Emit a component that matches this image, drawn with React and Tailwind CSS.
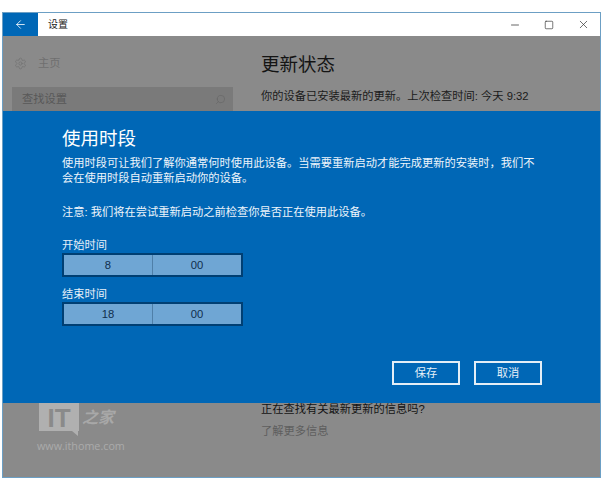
import React from 'react';
import { ArrowLeft, Minus, Square, X, Settings, Search } from 'lucide-react';

const font = "font-['Liberation_Sans','Noto_Sans_CJK_SC',sans-serif]";

function TimeField({ label, hour, minute }) {
  return (
    <div className="flex flex-col">
      <div className="h-[16px] text-[11.25px] leading-[16px] text-[#e6f0f8]">{label}</div>
      <div className="flex h-[24px] w-[181px] border-2 border-[#003f73] bg-[#6fa6d4] text-[11.25px] leading-[20px] text-[#0f2f4d]">
        <div className="flex-1 border-r border-[#4f7fa8] text-center">{hour}</div>
        <div className="flex-1 text-center">{minute}</div>
      </div>
    </div>
  );
}

function DialogButton({ children }) {
  return (
    <button className="h-[24px] w-[68px] border-2 border-[#e4eef6] text-[11.25px] leading-[20px] text-[#e6f0f8]">
      {children}
    </button>
  );
}

export default function App() {
  return (
    <div className={`${font} h-[492px] w-[606px] bg-white pl-[2px] pr-[5px] pt-[12px] pb-[14px]`}>
      <div className="flex h-[466px] w-[599px] flex-col border border-[#6c9fc4]">
        {/* title bar */}
        <div className="flex h-[23px] shrink-0 items-center bg-white">
          <div className="flex h-full w-[35px] items-center justify-center bg-[#0067b6] text-white">
            <ArrowLeft size={13} strokeWidth={1.5} />
          </div>
          <div className="ml-[10px] text-[10px] text-[#222]">设置</div>
          <div className="ml-auto flex items-center text-[#333]">
            <div className="flex w-[34px] justify-center"><Minus size={12} strokeWidth={1.5} /></div>
            <div className="flex w-[34px] justify-center"><Square size={10} strokeWidth={1.6} /></div>
            <div className="flex w-[34px] justify-center"><X size={13} strokeWidth={1.3} /></div>
          </div>
        </div>

        {/* settings page, dimmed */}
        <div className="flex h-[75px] shrink-0 bg-[#8a8a8a]">
          <div className="flex w-[258px] flex-col pl-[9px]">
            <div className="mt-[20px] flex h-[14px] items-center text-[#6f6f6f]">
              <Settings size={13} strokeWidth={1.2} className="ml-[2px]" />
              <span className="ml-[11px] text-[11.25px]">主页</span>
            </div>
            <div className="mt-[17px] flex h-[24px] w-[221px] items-center justify-between bg-[#7a7a7a] pl-[10px] pr-[7px] text-[11.25px] text-[#585858]">
              <span>查找设置</span>
              <Search size={11} strokeWidth={1.4} className="-scale-x-100 text-[#666]" />
            </div>
          </div>
          <div className="flex flex-col">
            <div className="mt-[16px] text-[18.5px] leading-[26px] text-[#141414]">更新状态</div>
            <div className="mt-[10px] text-[11.25px] leading-[16px] text-[#1a1a1a]">你的设备已安装最新的更新。上次检查时间: 今天 9:32</div>
          </div>
        </div>

        {/* active hours dialog */}
        <div className="flex h-[292px] shrink-0 flex-col bg-[#0067b6] pl-[59px] pr-[50px] text-white">
          <div className="mt-[16px] text-[18.5px] leading-[24px]">使用时段</div>
          <div className="mt-[5px] text-[11.25px] leading-[15px] text-[#eef5fb]">
            <p>使用时段可让我们了解你通常何时使用此设备。当需要重新启动才能完成更新的安装时，我们不</p>
            <p>会在使用时段自动重新启动你的设备。</p>
          </div>
          <p className="mt-[19px] text-[11.25px] leading-[15px] text-[#eef5fb]">注意: 我们将在尝试重新启动之前检查你是否正在使用此设备。</p>
          <div className="mt-[17px] flex flex-col gap-[9px]">
            <TimeField label="开始时间" hour="8" minute="00" />
            <TimeField label="结束时间" hour="18" minute="00" />
          </div>
          <div className="mt-[35px] flex gap-[14px] pl-[330px]">
            <DialogButton>保存</DialogButton>
            <DialogButton>取消</DialogButton>
          </div>
        </div>

        <div className="relative flex-1 bg-[#8a8a8a] pl-[258px]">
          <div className="mt-[-2px] text-[11.25px] leading-[16px] text-[#141414]">正在查找有关最新更新的信息吗?</div>
          <div className="mt-[6px] text-[11.25px] leading-[16px] text-[#5e5e5e]">了解更多信息</div>

          {/* watermark */}
          <div className="absolute left-[34px] top-0 flex flex-col text-[#ababab]">
            <div className="flex items-start">
              <svg width="42" height="34" viewBox="0 0 42 34" className="shrink-0">
                <path d="M2 0H42V28H41V33L35 28H2Z" fill="#b0b0b0" />
                <text x="22" y="24" textAnchor="middle" fontSize="26" fontWeight="700" fill="#8a8a8a" fontFamily="Liberation Sans">IT</text>
              </svg>
              <div className="ml-[3px] font-['Noto_Sans_CJK_SC',sans-serif] text-[16px] font-bold italic leading-[26px] text-[#a8a8a8]">之家</div>
            </div>
            <div className="mt-[2px] font-['Open_Sans',sans-serif] text-[10.75px] leading-[14px]">www.ithome.com</div>
          </div>
        </div>
      </div>
    </div>
  );
}
